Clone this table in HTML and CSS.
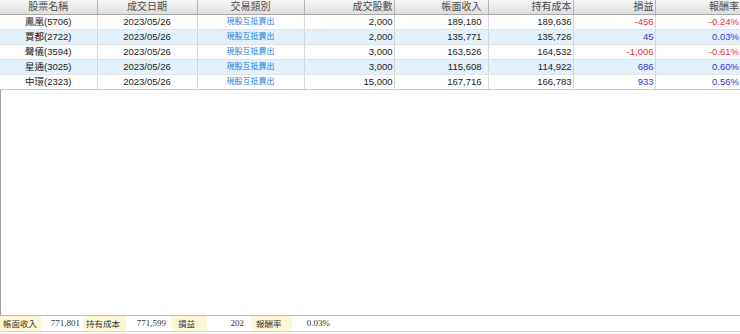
FILE: index.html
```html
<!DOCTYPE html>
<html lang="zh-Hant">
<head>
<meta charset="utf-8">
<link rel="stylesheet" href="styles.css">
</head>
<body>
<div class="page">
  <table class="grid">
    <colgroup>
      <col class="c1"><col class="c2"><col class="c3"><col class="c4"><col class="c5"><col class="c6"><col class="c7"><col class="c8">
    </colgroup>
    <thead>
      <tr>
        <th class="ctr">股票名稱</th>
        <th class="ctr">成交日期</th>
        <th class="ctr">交易類別</th>
        <th class="rt">成交股數</th>
        <th class="rt p5">帳面收入</th>
        <th class="rt">持有成本</th>
        <th class="rt">損益</th>
        <th class="rt">報酬率</th>
      </tr>
    </thead>
    <tbody>
      <tr>
        <td class="ctr">鳳凰(5706)</td><td class="ctr">2023/05/26</td><td class="ctr link">現股互抵賣出</td>
        <td class="rt">2,000</td><td class="rt p5">189,180</td><td class="rt">189,636</td><td class="rt neg">-456</td><td class="rt neg">-0.24%</td>
      </tr>
      <tr class="alt">
        <td class="ctr">賈都(2722)</td><td class="ctr">2023/05/26</td><td class="ctr link">現股互抵賣出</td>
        <td class="rt">2,000</td><td class="rt p5">135,771</td><td class="rt">135,726</td><td class="rt pos">45</td><td class="rt pos">0.03%</td>
      </tr>
      <tr>
        <td class="ctr">聲儀(3594)</td><td class="ctr">2023/05/26</td><td class="ctr link">現股互抵賣出</td>
        <td class="rt">3,000</td><td class="rt p5">163,526</td><td class="rt">164,532</td><td class="rt neg">-1,006</td><td class="rt neg">-0.61%</td>
      </tr>
      <tr class="alt">
        <td class="ctr">星通(3025)</td><td class="ctr">2023/05/26</td><td class="ctr link">現股互抵賣出</td>
        <td class="rt">3,000</td><td class="rt p5">115,608</td><td class="rt">114,922</td><td class="rt pos">686</td><td class="rt pos">0.60%</td>
      </tr>
      <tr>
        <td class="ctr">中環(2323)</td><td class="ctr">2023/05/26</td><td class="ctr link">現股互抵賣出</td>
        <td class="rt">15,000</td><td class="rt p5">167,716</td><td class="rt">166,783</td><td class="rt pos">933</td><td class="rt pos">0.56%</td>
      </tr>
    </tbody>
  </table>
  <div class="blank"></div>
  <div class="footer">
    <span class="lbl w1">帳面收入</span><span class="val v1">771,801</span>
    <span class="lbl w2">持有成本</span><span class="val v2">771,599</span>
    <span class="lbl w3">損益</span><span class="val v3">202</span>
    <span class="lbl w4">報酬率</span><span class="val v4">0.03%</span>
  </div>
</div>
</body>
</html>
```

FILE: styles.css
```css
html, body {
  margin: 0;
  padding: 0;
  background: #ffffff;
}

.page {
  width: 740px;
  height: 334px;
  display: flex;
  flex-direction: column;
  font-family: "Liberation Sans", "Noto Sans CJK TC", sans-serif;
  color: #222;
}

.grid {
  width: 740px;
  border-collapse: collapse;
  table-layout: fixed;
  flex: none;
}

.c1 { width: 97px; }
.c2 { width: 100px; }
.c3 { width: 107px; }
.c4 { width: 90px; }
.c5 { width: 94px; }
.c6 { width: 85px; }
.c7 { width: 82px; }
.c8 { width: 85px; }

.grid th {
  height: 14px;
  padding: 0 1px;
  font-size: 10px;
  font-weight: normal;
  color: #4a4a4a;
  background: linear-gradient(#f6f6f6, #dedede);
  border-right: 1px solid #b4b4b4;
  border-bottom: 1px solid #a8a8a8;
  line-height: 14px;
  white-space: nowrap;
  overflow: hidden;
}

.grid th:last-child { border-right: none; }

.grid td {
  height: 14px;
  padding: 0 1px;
  font-size: 9.5px;
  line-height: 14px;
  border-right: 1px solid #d6d6d6;
  border-bottom: 1px solid #e2e2e2;
  white-space: nowrap;
  overflow: hidden;
  color: #222;
}

.grid td:last-child { border-right: none; }

.grid .p5 { padding-right: 6px; }

.grid tbody tr:last-child td { border-bottom: 1px solid #c8c8c8; }

.grid tr.alt td { background: #e2f1fb; }

.ctr { text-align: center; }
.rt { text-align: right; }

.grid td.link {
  color: #1f7ae0;
  font-size: 8px;
}

.grid td.neg { color: #f0283c; }
.grid td.pos { color: #3a32d6; }

.blank {
  flex: 1;
  border-left: 1px solid #a0a0a0;
  border-bottom: 1px solid #bdbdbd;
}

.footer {
  flex: none;
  height: 15px;
  margin-bottom: 2px;
  display: flex;
  align-items: stretch;
  border-bottom: 1px solid #d8d8d8;
  font-family: "Liberation Serif", "Noto Sans CJK TC", serif;
  color: #333;
}

.lbl {
  background: #fdf8d4;
  font-family: "Noto Sans CJK TC", sans-serif;
  font-size: 8.5px;
  line-height: 15px;
  padding-left: 3px;
  box-sizing: border-box;
}

.val {
  font-size: 9px;
  line-height: 15px;
  text-align: right;
  padding-right: 2px;
  box-sizing: border-box;
}

.w1 { width: 42px; }
.v1 { width: 40px; }
.w2 { width: 43px; margin-left: 1px; }
.v2 { width: 42px; }
.w3 { width: 36px; margin-left: 3px; padding-left: 7px; }
.v3 { width: 39px; }
.w4 { width: 41px; margin-left: 5px; padding-left: 5px; }
.v4 { width: 40px; }
```
